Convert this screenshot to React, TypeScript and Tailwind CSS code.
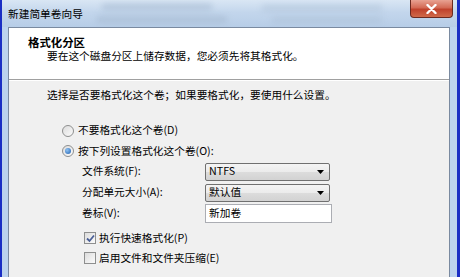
const font = { fontFamily: '"Noto Sans CJK SC", "Noto Sans", sans-serif' }

function Radio({ checked }: { checked?: boolean }) {
  return (
    <span className="flex h-[12px] w-[12px] items-center justify-center rounded-full border border-[#8e8f8f] bg-[linear-gradient(135deg,#dcdcdc,#fbfbfb)]">
      {checked && (
        <span className="h-[6px] w-[6px] rounded-full bg-[radial-gradient(circle_at_35%_35%,#8fc2f2,#1f5fb0)]" />
      )}
    </span>
  )
}

function Checkbox({ checked }: { checked?: boolean }) {
  return (
    <span className="flex h-[12px] w-[12px] items-center justify-center border border-[#8e8f8f] bg-[linear-gradient(135deg,#dcdcdc,#fbfbfb)]">
      {checked && (
        <svg width="9" height="9" viewBox="0 0 9 9">
          <path d="M1 4.5 L3.5 7 L8 1.5" fill="none" stroke="#4a5f97" strokeWidth="1.8" />
        </svg>
      )}
    </span>
  )
}

function Select({ value }: { value: string }) {
  return (
    <div className="flex h-[18px] w-[125px] items-center justify-between rounded-[2px] border border-[#707070] bg-[linear-gradient(180deg,#f4f4f4_0%,#ebebeb_50%,#dcdcdc_51%,#d2d2d2_100%)] pl-[3px] pr-[5px]">
      <span className="text-[10.7px] leading-none text-black">{value}</span>
      <svg width="7" height="4" viewBox="0 0 7 4">
        <path d="M0 0 H7 L3.5 4 Z" fill="#000" />
      </svg>
    </div>
  )
}

export default function App() {
  return (
    <div
      className="flex h-[277px] w-[460px] flex-col overflow-hidden border-l-2 border-r-[3px] border-[#1a2ec4] bg-[#bcd3ee]"
      style={font}
    >
      {/* title bar */}
      <div className="relative flex h-[27px] shrink-0 items-start justify-between overflow-hidden bg-[linear-gradient(180deg,#d9e6f4_0%,#c3d6ec_45%,#b7cde7_100%)]">
        {/* blurred glass streaks */}
        <div className="absolute left-[100px] top-[4px] h-[6px] w-[110px] bg-[#9fb4cc] opacity-60 blur-[3px]" />
        <div className="absolute left-[95px] top-[16px] h-[7px] w-[130px] bg-[#a4b8cf] opacity-60 blur-[3px]" />
        <div className="absolute left-[260px] top-[5px] h-[6px] w-[120px] bg-[#a8bcd2] opacity-50 blur-[3px]" />
        <div className="absolute left-[270px] top-[17px] h-[6px] w-[110px] bg-[#a8bcd2] opacity-50 blur-[3px]" />
        <span className="relative pl-[6px] pt-[7px] text-[10.7px] leading-[14px] text-black">新建简单卷向导</span>
        <div className="relative mr-[4px] flex h-[18px] w-[43px] items-center justify-center rounded-b-[4px] border border-t-0 border-[#6b2a20] bg-[linear-gradient(180deg,#e8a292_0%,#d36a55_45%,#c0422c_55%,#d06a4a_100%)]">
          <svg width="11" height="10" viewBox="0 0 11 10">
            <path d="M1.5 1 L9.5 9 M9.5 1 L1.5 9" stroke="#fff" strokeWidth="2.4" strokeLinecap="round" />
          </svg>
        </div>
      </div>

      {/* client */}
      <div className="flex flex-1 pl-[6px] pr-[7px]">
        <div className="flex flex-1 flex-col border-l border-r border-t border-[#7a8aa0] text-[10.7px] text-black">
          <div className="h-[52px] shrink-0 border-b border-[#a0a0a0] bg-white">
            <div className="pl-[19px] pt-[7px] text-[11.4px] font-bold leading-[14px]">格式化分区</div>
            <div className="pl-[38px] leading-[13px]">要在这个磁盘分区上储存数据，您必须先将其格式化。</div>
          </div>
          <div className="flex-1 border-t border-white bg-[#f0f0f0]">
            <div className="pl-[38px] pt-[7px] leading-[14px]">选择是否要格式化这个卷；如果要格式化，要使用什么设置。</div>

            <div className="mt-[18px] flex h-[21px] items-center gap-[4px] pl-[53px]">
              <Radio />
              <span>不要格式化这个卷(D)</span>
            </div>
            <div className="flex h-[20px] items-center gap-[4px] pl-[53px]">
              <Radio checked />
              <span>按下列设置格式化这个卷(O):</span>
            </div>

            <div className="flex flex-col pl-[73px]">
              <div className="flex h-[21px] items-center">
                <span className="w-[123px]">文件系统(F):</span>
                <Select value="NTFS" />
              </div>
              <div className="flex h-[21px] items-center">
                <span className="w-[123px]">分配单元大小(A):</span>
                <Select value="默认值" />
              </div>
              <div className="flex h-[21px] items-center">
                <span className="w-[123px]">卷标(V):</span>
                <div className="flex h-[19px] w-[127px] items-center border border-[#abadb3] bg-white pl-[3px] leading-none">
                  新加卷
                </div>
              </div>
            </div>

            <div className="mt-[4px] flex h-[20px] items-center gap-[3px] pl-[75px]">
              <Checkbox checked />
              <span>执行快速格式化(P)</span>
            </div>
            <div className="flex h-[20px] items-center gap-[3px] pl-[75px]">
              <Checkbox />
              <span>启用文件和文件夹压缩(E)</span>
            </div>
          </div>
        </div>
      </div>
    </div>
  )
}
